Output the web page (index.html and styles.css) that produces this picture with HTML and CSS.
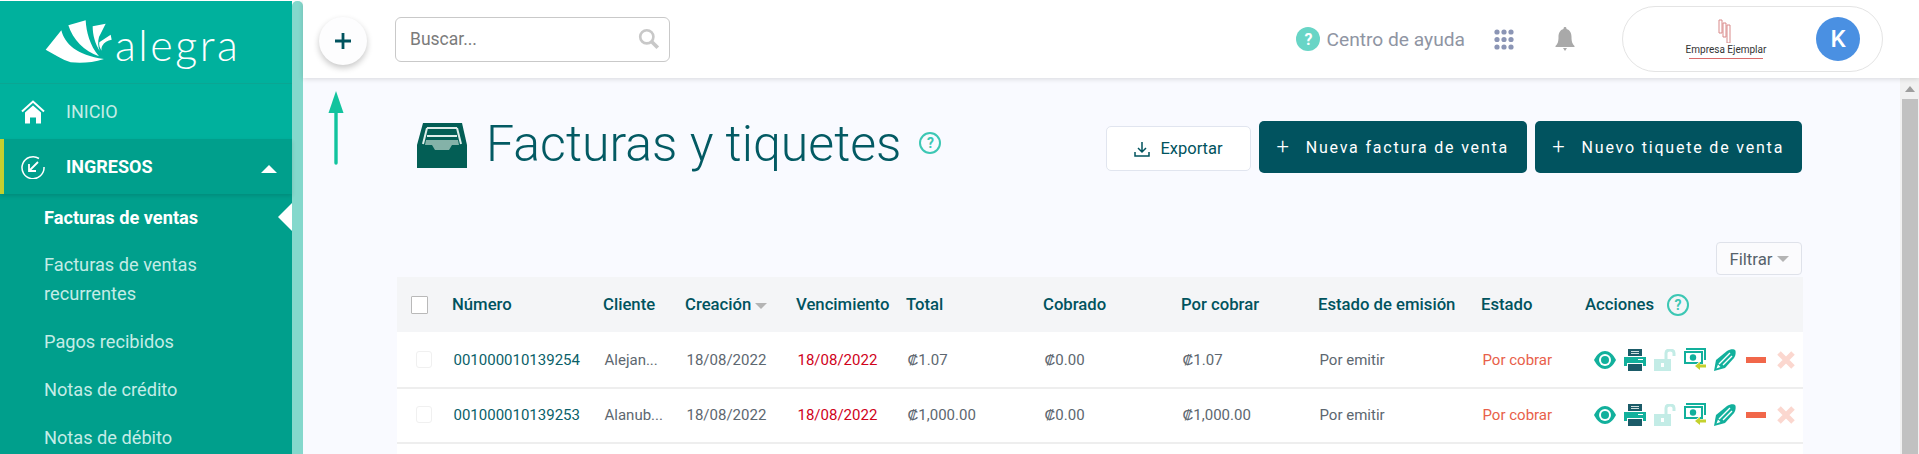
FILE: index.html
```html
<!DOCTYPE html>
<html lang="es">

<head>
    <meta charset="UTF-8">
    <title>Facturas y tiquetes</title>
    <link rel="stylesheet" href="styles.css">
</head>

<body>
    <svg class="iconos-defs" aria-hidden="true">
        <symbol id="i-ver" viewBox="0 0 22 18">
            <path d="M0 9C3 3 7 0 11 0s8 3 11 9c-3 6-7 9-11 9S3 15 0 9z" fill="#12b09c" />
            <circle cx="11" cy="9" r="6" fill="#fff" />
            <circle cx="11" cy="9" r="4" fill="#12b09c" />
        </symbol>
        <symbol id="i-imprimir" viewBox="0 0 22 22">
            <path d="M4 0h14v7H4z" fill="#1b5b68" />
            <path d="M7 2h8v1H7zM7 4h8v1H7z" fill="#cfe0e0" />
            <path d="M0 8h22v9h-3v-3H3v3H0z" fill="#12b09c" />
            <path d="M14 10h5v1h-5z" fill="#fff" />
            <path d="M4 15h14v7H4z" fill="#1b5b68" />
        </symbol>
        <symbol id="i-candado" viewBox="0 0 22 22">
            <path d="M0 10h17v12H0z" fill="#c3ece6" />
            <path d="M12 10V4c0-4 8-4 8 0v3" fill="none" stroke="#c3ece6" stroke-width="3" />
            <path d="M7 14h3v4H7z" fill="#fff" />
        </symbol>
        <symbol id="i-dinero" viewBox="0 0 22 23">
            <path d="M2 0h20v12h-2V2H2z" fill="#12b09c" />
            <path d="M1 4h17v11H1z" fill="#fff" stroke="#12b09c" stroke-width="2" />
            <circle cx="9" cy="9.500" r="3.200" fill="#12b09c" />
            <path d="M10 18l6-5v3h6v4h-6v3z" fill="#fff" />
            <path d="M11 18l5-4v2.500h6v3h-6V22z" fill="#c4d12e" />
        </symbol>
        <symbol id="i-pluma" viewBox="0 0 22 22">
            <path d="M0 22L2 11 13 2c3-2 7-2 8-1s1 5-1 8L11 19z" fill="#12b09c" />
            <path d="M5 15L16 4M9 16l9-9" stroke="#fff" stroke-width="1.400" />
            <path d="M2.500 19.500l1.500-4 2.500 2.500z" fill="#fff" />
        </symbol>
        <symbol id="i-anular" viewBox="0 0 20 6">
            <path d="M0 0h20v6H0z" fill="#f1674a" />
        </symbol>
        <symbol id="i-borrar" viewBox="0 0 18 18">
            <path d="M2 2l14 14M16 2L2 16" stroke="#fbd7cf" stroke-width="5" />
        </symbol>
    </svg>

    <aside class="sidebar">
        <div class="sidebar-panel">
            <div class="logo">
                <svg class="logo-alas" viewBox="40 38 210 138">
                    <path d="M45 130L92 72c10 40 45 75 128 86-35 12-70 12-100 10-25-8-50-25-75-38z" fill="#fff" />
                    <path d="M113 57l52-15c2 35 12 75 40 108-45-15-78-50-92-93z" fill="#fff" />
                    <path d="M186 60l39-8-20 40c-4 14-3 28 2 42-14-22-21-48-21-74z" fill="#fff" />
                    <path d="M206 108l34-23 3 15c-12 2-23 8-28 18-3 5-3 10-2 15-6-8-9-17-7-25z" fill="#fff" />
                </svg>
                <span class="logo-texto">alegra</span>
            </div>
            <a class="menu-item">
                <svg class="menu-icono" viewBox="0 0 24 23">
                    <path d="M1 11L12 1l11 10" fill="none" stroke="#fff" stroke-width="2" />
                    <path d="M4 12l8-7 8 7v11h-5v-6H9v6H4z" fill="#fff" />
                </svg>
                <span>INICIO</span>
            </a>
            <a class="menu-item menu-activo">
                <svg class="menu-icono" viewBox="0 0 24 24">
                    <path d="M18 3.500A11 11 0 1 0 23 12" fill="none" stroke="#fff" stroke-width="1.500" />
                    <path d="M17 7l-9 9M8 9v7h7" fill="none" stroke="#fff" stroke-width="1.800" />
                </svg>
                <span>INGRESOS</span>
                <i class="menu-caret"></i>
            </a>
            <nav class="submenu">
                <a class="submenu-item submenu-activo">Facturas de ventas</a>
                <a class="submenu-item">Facturas de ventas recurrentes</a>
                <a class="submenu-item">Pagos recibidos</a>
                <a class="submenu-item">Notas de crédito</a>
                <a class="submenu-item">Notas de débito</a>
            </nav>
        </div>
        <div class="sidebar-scroll"></div>
    </aside>

    <main class="principal">
        <header class="topbar">
            <button class="boton-mas">
                <svg viewBox="0 0 16 16" width="16" height="16">
                    <path d="M8 0v16M0 8h16" stroke="#00535e" stroke-width="2.800" />
                </svg>
            </button>
            <div class="buscador">
                <span>Buscar...</span>
                <svg viewBox="0 0 20 20" width="22" height="22">
                    <circle cx="8" cy="8" r="6" fill="none" stroke="#c8c8c8" stroke-width="2.400" />
                    <path d="M12.500 12.500L18 18" stroke="#c8c8c8" stroke-width="3.400" />
                </svg>
            </div>
            <div class="ayuda">
                <span class="ayuda-icono">?</span>
                <span>Centro de ayuda</span>
            </div>
            <svg class="apps" viewBox="0 0 20 21" width="20" height="21">
                <g fill="#8b95b5">
                    <circle cx="3" cy="3" r="2.600" />
                    <circle cx="10" cy="3" r="2.600" />
                    <circle cx="17" cy="3" r="2.600" />
                    <circle cx="3" cy="10.500" r="2.600" />
                    <circle cx="10" cy="10.500" r="2.600" />
                    <circle cx="17" cy="10.500" r="2.600" />
                    <circle cx="3" cy="18" r="2.600" />
                    <circle cx="10" cy="18" r="2.600" />
                    <circle cx="17" cy="18" r="2.600" />
                </g>
            </svg>
            <svg class="campana" viewBox="0 0 20 24" width="20" height="24">
                <path d="M10 0c1 0 1.500.6 1.500 2C15 3 16.500 6 16.500 10c0 5 1 7 3 9v1H.5v-1c2-2 3-4 3-9 0-4 1.500-7 5-8C8.500.6 9 0 10 0z" fill="#a9a9a9" />
                <path d="M8 21h4l-2 3z" fill="#a9a9a9" />
            </svg>
            <div class="usuario">
                <div class="empresa">
                    <svg viewBox="0 0 18 24" width="18" height="24">
                        <path d="M2 1h3v13H2zM6 4h3v14H6zM10 6h3v18h-3z" fill="none" stroke="#d98a8a" />
                    </svg>
                    <span class="empresa-nombre">Empresa Ejemplar</span>
                </div>
                <span class="avatar">K</span>
            </div>
        </header>

        <div class="contenido">
            <section class="pagina">
                <div class="encabezado">
                    <svg class="titulo-icono" viewBox="0 0 50 45">
                        <path d="M6 0h39l5 22v23H0V22z" fill="#035e55" />
                        <path d="M10 5h30M10 13h30M10 5L6 21M40 5l4 16" fill="none" stroke="#dfeeea" stroke-width="2" />
                        <path d="M9 17h32l1 5h-7l-3 5H18l-3-5H8z" fill="#84b2a8" />
                    </svg>
                    <h1 class="titulo">Facturas y tiquetes</h1>
                    <span class="ayuda-mini">?</span>
                    <div class="acciones">
                        <button class="boton-exportar">
                            <svg viewBox="0 0 16 16" width="16" height="16">
                                <path d="M8 1v9M4 7l4 4 4-4M1 11v4h14v-4" fill="none" stroke="#00535e" stroke-width="1.500" />
                            </svg>
                            Exportar
                        </button>
                        <button class="boton-nuevo"><span class="boton-plus">+</span>Nueva factura de venta</button>
                        <button class="boton-nuevo"><span class="boton-plus">+</span>Nuevo tiquete de venta</button>
                    </div>
                </div>

                <div class="filtros">
                    <button class="boton-filtrar">Filtrar<i class="caret-gris"></i></button>
                </div>

                <div class="tabla">
                    <div class="fila fila-cabecera">
                        <div><span class="check check-cabecera"></span></div>
                        <div>Número</div>
                        <div>Cliente</div>
                        <div>Creación<i class="caret-gris"></i></div>
                        <div>Vencimiento</div>
                        <div>Total</div>
                        <div>Cobrado</div>
                        <div>Por cobrar</div>
                        <div>Estado de emisión</div>
                        <div>Estado</div>
                        <div class="celda-acciones">Acciones <span class="ayuda-mini">?</span></div>
                    </div>
                    <div class="fila fila-datos">
                        <div><span class="check"></span></div>
                        <div class="numero">001000010139254</div>
                        <div>Alejan...</div>
                        <div>18/08/2022</div>
                        <div class="vencida">18/08/2022</div>
                        <div>₡1.07</div>
                        <div>₡0.00</div>
                        <div>₡1.07</div>
                        <div>Por emitir</div>
                        <div class="por-cobrar">Por cobrar</div>
                        <div class="iconos">
                            <svg class="i22" height="18"><use href="#i-ver" /></svg>
                            <svg class="i22" height="22"><use href="#i-imprimir" /></svg>
                            <svg class="i22" height="22"><use href="#i-candado" /></svg>
                            <svg class="i22" height="23"><use href="#i-dinero" /></svg>
                            <svg class="i22" height="22"><use href="#i-pluma" /></svg>
                            <svg class="i-menos" width="20" height="6"><use href="#i-anular" /></svg>
                            <svg class="i-equis" width="18" height="18"><use href="#i-borrar" /></svg>
                        </div>
                    </div>
                    <div class="fila fila-datos">
                        <div><span class="check"></span></div>
                        <div class="numero">001000010139253</div>
                        <div>Alanub...</div>
                        <div>18/08/2022</div>
                        <div class="vencida">18/08/2022</div>
                        <div>₡1,000.00</div>
                        <div>₡0.00</div>
                        <div>₡1,000.00</div>
                        <div>Por emitir</div>
                        <div class="por-cobrar">Por cobrar</div>
                        <div class="iconos">
                            <svg class="i22" height="18"><use href="#i-ver" /></svg>
                            <svg class="i22" height="22"><use href="#i-imprimir" /></svg>
                            <svg class="i22" height="22"><use href="#i-candado" /></svg>
                            <svg class="i22" height="23"><use href="#i-dinero" /></svg>
                            <svg class="i22" height="22"><use href="#i-pluma" /></svg>
                            <svg class="i-menos" width="20" height="6"><use href="#i-anular" /></svg>
                            <svg class="i-equis" width="18" height="18"><use href="#i-borrar" /></svg>
                        </div>
                    </div>
                </div>
            </section>

            <div class="scroll-pagina">
                <div class="scroll-flecha"></div>
                <div class="scroll-barra"></div>
            </div>
        </div>
    </main>

    <!-- flecha de anotacion sobre la captura -->
    <svg class="flecha-nota" viewBox="0 0 16 74" width="16" height="74">
        <path d="M8 0l7.500 22H.5z" fill="#12c39e" />
        <path d="M8 20v52" stroke="#12c39e" stroke-width="3.400" stroke-linecap="round" />
    </svg>
</body>

</html>
```

FILE: styles.css
```css
* {
    box-sizing: border-box;
}

html,
body {
    height: 454px;
    overflow: hidden;
}

body {
    margin: 0;
    display: flex;
    background-color: #fff;
    font-family: Roboto, "Liberation Sans", sans-serif;
}

button {
    font-family: inherit;
    cursor: pointer;
}

.iconos-defs {
    position: absolute;
    width: 0;
    height: 0;
}

/* Menu lateral */
.sidebar {
    display: flex;
    flex: none;
    width: 303px;
    height: 453px;
    margin-top: 1px;
    overflow: hidden;
}

.sidebar-panel {
    width: 292px;
    background-color: #00b19d;
}

.sidebar-scroll {
    width: 11px;
    background-color: #84d8cc;
    border-radius: 5px 5px 0 0;
}

.logo {
    display: flex;
    align-items: center;
    gap: 1px;
    height: 83px;
    padding-left: 44px;
    border-bottom: 1px solid #0aa693;
}

.logo-alas {
    width: 70px;
    height: 46px;
}

.logo-texto {
    margin-top: 4px;
    color: #fff;
    font-family: Lato, sans-serif;
    font-weight: 300;
    font-size: 43px;
    letter-spacing: 2.500px;
}

.menu-item {
    position: relative;
    display: flex;
    align-items: center;
    height: 55px;
    padding-left: 21px;
    color: #c5ece6;
    font-size: 18px;
}

.menu-icono {
    width: 24px;
    height: 24px;
    margin-right: 21px;
}

.menu-activo {
    background-color: #009f8c;
    border-left: 4px solid #c4cf2f;
    padding-left: 17px;
    color: #fff;
    font-weight: 700;
    box-shadow: 0 2px 4px rgba(0, 0, 0, 0.12);
}

.menu-caret {
    position: absolute;
    right: 15px;
    top: 26px;
    border-left: 8px solid transparent;
    border-right: 8px solid transparent;
    border-bottom: 8px solid #fff;
}

.submenu {
    display: flex;
    flex-direction: column;
    height: 260px;
    overflow: hidden;
    background-color: #009f8c;
}

.submenu-item {
    position: relative;
    flex: none;
    padding: 9.500px 30px 9.500px 44px;
    color: #c5ece6;
    font-size: 18.200px;
    line-height: 29px;
}

.submenu-item:first-child {
    margin-top: -1px;
    padding-bottom: 8.500px;
}

.submenu-activo {
    color: #fff;
    font-weight: 700;
}

.submenu-activo::after {
    content: "";
    position: absolute;
    right: 0;
    top: 10px;
    border-top: 14px solid transparent;
    border-bottom: 14px solid transparent;
    border-right: 14px solid #fff;
}

/* Barra superior */
.principal {
    display: flex;
    flex-direction: column;
    flex: 1;
    min-width: 0;
}

.topbar {
    position: relative;
    z-index: 1;
    display: flex;
    align-items: center;
    flex: none;
    height: 78px;
    padding-left: 16px;
    padding-right: 36px;
    background-color: #fff;
    box-shadow: 0 1px 5px rgba(0, 0, 0, 0.14);
}

.boton-mas {
    display: flex;
    align-items: center;
    justify-content: center;
    width: 48px;
    height: 48px;
    margin-top: 4px;
    padding: 0;
    border: none;
    border-radius: 50%;
    background-color: #fdfdfe;
    box-shadow: 0 3px 6px rgba(0, 0, 0, 0.22);
}

.buscador {
    display: flex;
    align-items: center;
    justify-content: space-between;
    width: 275px;
    height: 45px;
    margin-left: 28px;
    padding: 0 9px 0 14px;
    border: 1px solid #c9c9c9;
    border-radius: 6px;
    color: #7b7b7b;
    font-size: 17.500px;
}

.ayuda {
    display: flex;
    align-items: center;
    gap: 6px;
    margin-left: auto;
    color: #8f95a3;
    font-size: 19.200px;
}

.ayuda-icono {
    display: flex;
    align-items: center;
    justify-content: center;
    width: 24px;
    height: 24px;
    border-radius: 50%;
    background-color: #68d5c6;
    color: #fff;
    font-weight: 700;
    font-size: 16px;
}

.apps {
    margin-left: 29px;
}

.campana {
    margin-left: 41px;
}

.usuario {
    display: flex;
    align-items: center;
    width: 261px;
    height: 66px;
    margin-left: 47px;
    padding-left: 66px;
    border: 1px solid #e4e4e4;
    border-radius: 33px;
}

.empresa {
    display: flex;
    flex-direction: column;
    align-items: center;
    width: 74px;
    padding-bottom: 1px;
    border-bottom: 1px solid #d96a6a;
}

.empresa-nombre {
    color: #333;
    font-size: 10px;
    line-height: 14px;
    white-space: nowrap;
}

.avatar {
    display: flex;
    align-items: center;
    justify-content: center;
    width: 44px;
    height: 44px;
    margin-left: 53px;
    border-radius: 50%;
    background-color: #4a90e2;
    color: #fff;
    font-weight: 500;
    font-size: 24px;
}

/* Contenido */
.contenido {
    display: flex;
    flex: 1;
    min-height: 0;
    background-color: #f9faff;
}

.pagina {
    flex: 1;
    min-width: 0;
    padding-top: 43px;
}

.encabezado {
    display: flex;
    align-items: flex-start;
    height: 52px;
    margin-left: 114px;
    margin-right: 98px;
}

.titulo-icono {
    flex: none;
    width: 50px;
    height: 45px;
    margin-top: 2px;
}

.titulo {
    margin: -7px 0 0 19px;
    color: #035a63;
    font-weight: 300;
    font-size: 50px;
    line-height: 60px;
    white-space: nowrap;
}

.ayuda-mini {
    display: inline-flex;
    align-items: center;
    justify-content: center;
    flex: none;
    width: 22px;
    height: 22px;
    border: 2px solid #3cc7b4;
    border-radius: 50%;
    color: #3cc7b4;
    font-weight: 700;
    font-size: 14px;
    line-height: 1;
}

.encabezado .ayuda-mini {
    margin: 11px 0 0 18px;
}

.acciones {
    display: flex;
    align-items: center;
    gap: 8px;
    margin-left: auto;
    height: 52px;
}

.boton-exportar {
    display: flex;
    align-items: center;
    justify-content: center;
    gap: 10px;
    width: 145px;
    height: 45px;
    margin-top: 3px;
    padding: 0;
    border: 1px solid #e1e5ef;
    border-radius: 5px;
    background-color: #fff;
    color: #00535e;
    font-size: 16.500px;
}

.boton-nuevo {
    display: flex;
    align-items: center;
    justify-content: center;
    width: 267.500px;
    height: 52px;
    padding: 0;
    border: none;
    border-radius: 5px;
    background-color: #01535f;
    color: #fff;
    font-size: 16px;
    letter-spacing: 1.800px;
}

.boton-plus {
    margin-right: 15px;
    font-size: 22px;
    font-weight: 300;
    line-height: 20px;
}

.filtros {
    display: flex;
    justify-content: flex-end;
    margin-top: 69px;
    margin-right: 98px;
}

.boton-filtrar {
    display: flex;
    align-items: center;
    justify-content: center;
    width: 86px;
    height: 33px;
    padding: 0;
    border: 1px solid #dfe2ea;
    border-radius: 4px;
    background-color: #fbfbfd;
    color: #57626b;
    font-size: 16.800px;
}

.caret-gris {
    display: inline-block;
    margin-left: 4px;
    border-left: 6px solid transparent;
    border-right: 6px solid transparent;
    border-top: 6px solid #b4b4b4;
    vertical-align: middle;
}

/* Tabla */
.tabla {
    width: 1406px;
    height: 177px;
    margin-top: 2px;
    margin-left: 94px;
    background-color: #fff;
}

.fila {
    display: grid;
    grid-template-columns: 55px 151px 82px 111px 110px 137px 138px 137px 163px 104px 218px;
    align-items: center;
}

.fila-cabecera {
    height: 55px;
    margin-bottom: 2px;
    background-color: #f4f5f7;
    color: #00535e;
    font-weight: 500;
    font-size: 16.700px;
    white-space: nowrap;
}

.fila-datos {
    height: 55px;
    padding-bottom: 2px;
    border-bottom: 2px solid #eeeeee;
    color: #5d6770;
    font-size: 15px;
    white-space: nowrap;
}

.fila-datos>div {
    padding-left: 1.500px;
}

.check {
    display: block;
    width: 16px;
    height: 17px;
    margin-left: 17px;
    border: 1px solid #f0f0f0;
    border-radius: 3px;
    background-color: #fff;
}

.check-cabecera {
    width: 17px;
    height: 18px;
    margin-left: 14px;
    border: 1px solid #b9b9b9;
    border-radius: 1px;
}

.celda-acciones {
    display: flex;
    align-items: center;
    gap: 13px;
}

.fila-datos .numero {
    color: #0a5f69;
}

.vencida {
    color: #d0021b;
}

.por-cobrar {
    color: #e8604a;
}

.iconos {
    display: flex;
    align-items: center;
    gap: 8px;
    margin-left: 7px;
}

.i22 {
    width: 22px;
}

.i-menos {
    margin-left: 2px;
}

.i-equis {
    margin-left: 3px;
}

/* Scroll de la pagina */
.scroll-pagina {
    flex: none;
    width: 19px;
    background-color: #f1f1f1;
}

.scroll-flecha {
    width: 0;
    margin: 8px auto 7px;
    border-left: 5px solid transparent;
    border-right: 5px solid transparent;
    border-bottom: 6px solid #9e9e9e;
}

.scroll-barra {
    height: 355px;
    margin-left: 2px;
    margin-right: 1px;
    background-color: #c1c1c1;
}

/* Flecha de anotacion */
.flecha-nota {
    position: absolute;
    left: 328px;
    top: 91px;
}
```
